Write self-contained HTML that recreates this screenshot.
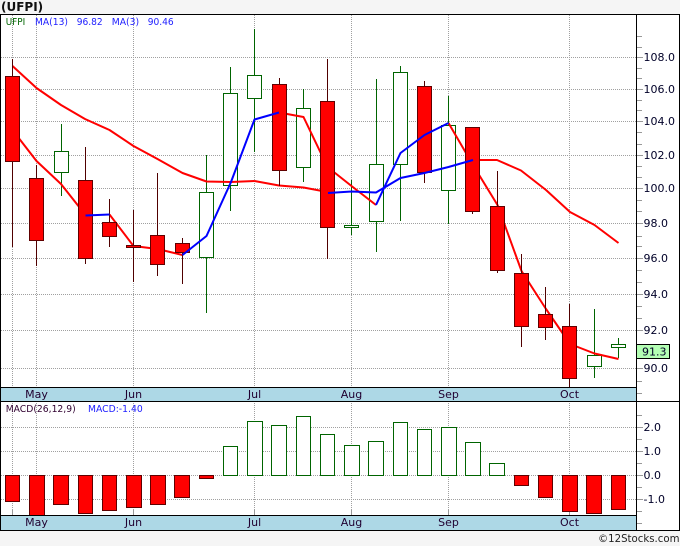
<!DOCTYPE html>
<html><head><meta charset="utf-8"><style>
html,body{margin:0;padding:0;background:#f5f5f5;width:680px;height:546px;overflow:hidden}
svg{display:block}
text{font-family:"DejaVu Sans",sans-serif}
.ax{font-size:11px;fill:#000028}
.mo{font-size:11px;fill:#200030;text-anchor:middle}
.lg{font-size:10px}
.g{stroke:#a0a0a0;stroke-width:1;stroke-dasharray:1 1;fill:none}
.t{stroke:#999;stroke-width:1;fill:none}
.gw{stroke:#006400;stroke-width:1;fill:none}
.gb{stroke:#006400;stroke-width:1;fill:#fff}
.rw{stroke:#500000;stroke-width:1;fill:none}
.rb{stroke:#600000;stroke-width:1;fill:#f00}
.l{fill:none;stroke-width:2;stroke-linejoin:round;stroke-linecap:butt}
</style></head><body>
<svg width="680" height="546" viewBox="0 0 680 546" xmlns="http://www.w3.org/2000/svg">
<rect x="0" y="14" width="680" height="517" fill="#fff"/>
<text x="1" y="11" style="font-size:12px;font-weight:bold" fill="#111">(UFPI)</text>

<g shape-rendering="crispEdges">
<path class="g" d="M1 57.5H636M1 89.5H636M1 121.5H636M1 155.5H636M1 188.5H636M1 223.5H636M1 258.5H636M1 294.5H636M1 330.5H636M1 368.5H636M1 427.5H636M1 451.5H636M1 475.5H636M1 499.5H636"/>
<path class="g" d="M12.5 15V515M36.5 15V515M133.5 15V515M254.5 15V515M351.5 15V515M448.5 15V515M569.5 15V515"/>
<path class="t" d="M12.5 510V515M36.5 510V515M133.5 510V515M254.5 510V515M351.5 510V515M448.5 510V515M569.5 510V515"/>
<path class="t" d="M637 36.5H642M637 47.5H642M637 57.5H643M637 68.5H642M637 78.5H642M637 89.5H643M637 100.5H642M637 110.5H642M637 121.5H643M637 132.5H642M637 144.5H642M637 155.5H643M637 166.5H642M637 177.5H642M637 188.5H643M637 200.5H642M637 211.5H642M637 223.5H643M637 236.5H642M637 246.5H642M637 258.5H643M637 270.5H642M637 282.5H642M637 294.5H643M637 306.5H642M637 318.5H642M637 330.5H643M637 368.5H643M637 381.5H642M637 393.5H642M637 415.5H642M637 427.5H643M637 439.5H642M637 451.5H643M637 463.5H642M637 475.5H643M637 487.5H642M637 499.5H643M637 511.5H642M637 523.5H642"/>

<!-- green candles -->
<path class="gw" d="M61.5 124V196M206.5 155V313M230.5 67V211M254.5 29V152M303.5 89V182M351.5 180V235M376.5 79V252M400.5 66V221M448.5 96V224M594.5 309V378M618.5 338V358"/>
<rect class="gb" x="54.5" y="151.5" width="14" height="21"/>
<rect class="gb" x="199.5" y="192.5" width="14" height="65"/>
<rect class="gb" x="223.5" y="93.5" width="14" height="92"/>
<rect class="gb" x="247.5" y="75.5" width="14" height="23"/>
<rect class="gb" x="296.5" y="108.5" width="14" height="59"/>
<rect class="gb" x="344.5" y="225.5" width="14" height="2"/>
<rect class="gb" x="369.5" y="164.5" width="14" height="57"/>
<rect class="gb" x="393.5" y="72.5" width="14" height="92"/>
<rect class="gb" x="441.5" y="125.5" width="14" height="65"/>
<rect class="gb" x="587.5" y="355.5" width="14" height="11"/>
<rect class="gb" x="611.5" y="344.5" width="14" height="3"/>
</g>

<!-- red MA lines -->
<polyline class="l" stroke="#f00" points="12.5,66 36.5,88 61,105 85,119 109.5,130 133.5,146 157.5,159 182.5,173 206.5,181.5 231,182 254.5,181"/>
<polyline class="l" stroke="#f00" points="254.5,181 279,185.5 303.5,187.5 327.5,192"/>
<polyline class="l" stroke="#f00" points="473,160 497,160 521,170.5 546,190 570,212 594.5,225 618.5,243"/>
<polyline class="l" stroke="#f00" points="12.5,130 36.5,161 61,184 85.5,215"/>
<polyline class="l" stroke="#f00" points="109.5,214.5 133.5,246 157.5,249 182.5,255"/>
<polyline class="l" stroke="#f00" points="279,112.5 303.5,117 327.5,167 351.5,186 376,205"/>
<polyline class="l" stroke="#f00" points="448.5,123 473,165 497.5,205 521.5,271 546,309 570,344 594.5,353.5 618.5,359"/>

<g shape-rendering="crispEdges">
<!-- red candles -->
<path class="rw" d="M12.5 59V247M36.5 165V266M85.5 147V264M109.5 199V247M133.5 210V282M157.5 173V276M182.5 238V284M279.5 78V186M327.5 59V259M424.5 81V183M472.5 127V214M497.5 171V273M521.5 254V347M545.5 287V340M569.5 304V387"/>
<rect class="rb" x="5.5" y="76.5" width="14" height="85"/>
<rect class="rb" x="29.5" y="178.5" width="14" height="62"/>
<rect class="rb" x="78.5" y="180.5" width="14" height="78"/>
<rect class="rb" x="102.5" y="222.5" width="14" height="14"/>
<rect class="rb" x="126.5" y="245.5" width="14" height="2"/>
<rect class="rb" x="150.5" y="235.5" width="14" height="29"/>
<rect class="rb" x="175.5" y="243.5" width="14" height="9"/>
<rect class="rb" x="272.5" y="84.5" width="14" height="86"/>
<rect class="rb" x="320.5" y="101.5" width="14" height="126"/>
<rect class="rb" x="417.5" y="86.5" width="14" height="86"/>
<rect class="rb" x="465.5" y="127.5" width="14" height="84"/>
<rect class="rb" x="490.5" y="206.5" width="14" height="64"/>
<rect class="rb" x="514.5" y="273.5" width="14" height="53"/>
<rect class="rb" x="538.5" y="314.5" width="14" height="13"/>
<rect class="rb" x="562.5" y="326.5" width="14" height="52"/>
</g>

<!-- blue lines -->
<polyline class="l" stroke="#00f" points="85.5,215.5 109.5,214.5"/>
<polyline class="l" stroke="#00f" points="182.5,255 206.5,236 231,182 254.5,119.5 279,112.5"/>
<polyline class="l" stroke="#00f" points="328,193 351.5,191.5 376,192.5 400.5,178 424.5,173 448.5,167 473,160"/>
<polyline class="l" stroke="#00f" points="376,205 400.5,153 424.5,135 448.5,123"/>

<g shape-rendering="crispEdges">
<!-- MACD -->
<rect class="rb" x="5.5" y="475.5" width="14" height="26"/>
<rect class="rb" x="29.5" y="475.5" width="15" height="40"/>
<rect class="rb" x="53.5" y="475.5" width="15" height="29"/>
<rect class="rb" x="78.5" y="475.5" width="14" height="38"/>
<rect class="rb" x="102.5" y="475.5" width="14" height="35"/>
<rect class="rb" x="126.5" y="475.5" width="15" height="32"/>
<rect class="rb" x="150.5" y="475.5" width="15" height="29"/>
<rect class="rb" x="174.5" y="475.5" width="15" height="22"/>
<rect class="rb" x="199.5" y="475.5" width="14" height="3"/>
<rect class="gb" x="223.5" y="446.5" width="14" height="29"/>
<rect class="gb" x="247.5" y="421.5" width="15" height="54"/>
<rect class="gb" x="271.5" y="425.5" width="15" height="50"/>
<rect class="gb" x="296.5" y="416.5" width="14" height="59"/>
<rect class="gb" x="320.5" y="434.5" width="14" height="41"/>
<rect class="gb" x="344.5" y="445.5" width="15" height="30"/>
<rect class="gb" x="368.5" y="441.5" width="15" height="34"/>
<rect class="gb" x="393.5" y="422.5" width="14" height="53"/>
<rect class="gb" x="417.5" y="429.5" width="14" height="46"/>
<rect class="gb" x="441.5" y="427.5" width="15" height="48"/>
<rect class="gb" x="465.5" y="442.5" width="15" height="33"/>
<rect class="gb" x="489.5" y="463.5" width="15" height="12"/>
<rect class="rb" x="514.5" y="475.5" width="14" height="10"/>
<rect class="rb" x="538.5" y="475.5" width="14" height="22"/>
<rect class="rb" x="562.5" y="475.5" width="15" height="36"/>
<rect class="rb" x="586.5" y="475.5" width="15" height="38"/>
<rect class="rb" x="611.5" y="475.5" width="14" height="34"/>

<!-- bands and frame -->
<rect x="1" y="388" width="635" height="13" fill="#add8e6"/>
<rect x="1" y="516" width="635" height="14" fill="#add8e6"/>
<rect x="0" y="14" width="680" height="1" fill="#000"/>
<rect x="0" y="387" width="636" height="1" fill="#000"/>
<rect x="0" y="401" width="680" height="1" fill="#000"/>
<rect x="0" y="515" width="636" height="1" fill="#000"/>
<rect x="0" y="530" width="680" height="1" fill="#000"/>
<rect x="0" y="14" width="1" height="517" fill="#000"/>
<rect x="636" y="14" width="1" height="517" fill="#000"/>
<rect x="679" y="14" width="1" height="517" fill="#000"/>
<rect x="636.5" y="344.5" width="33" height="14" fill="#b4ffb4" stroke="#000"/>
</g>

<!-- legends -->
<text class="lg" x="5.7" y="25" fill="#006400" textLength="19.5" lengthAdjust="spacingAndGlyphs">UFPI</text>
<text class="lg" x="35" y="25" fill="#2020ff" textLength="33" lengthAdjust="spacingAndGlyphs">MA(13)</text>
<text class="lg" x="76.7" y="25" fill="#2020ff" textLength="26" lengthAdjust="spacingAndGlyphs">96.82</text>
<text class="lg" x="111.7" y="25" fill="#2020ff" textLength="27.5" lengthAdjust="spacingAndGlyphs">MA(3)</text>
<text class="lg" x="147.7" y="25" fill="#2020ff" textLength="26" lengthAdjust="spacingAndGlyphs">90.46</text>
<text class="lg" x="5.7" y="412" fill="#300030" textLength="70" lengthAdjust="spacingAndGlyphs">MACD(26,12,9)</text>
<text class="lg" x="88" y="412" fill="#2020ff" textLength="54.7" lengthAdjust="spacingAndGlyphs">MACD:-1.40</text>

<!-- months -->
<text class="mo" x="36.5" y="398">May</text><text class="mo" x="133.5" y="398">Jun</text><text class="mo" x="254.5" y="398">Jul</text><text class="mo" x="351.5" y="398">Aug</text><text class="mo" x="448.5" y="398">Sep</text><text class="mo" x="569.5" y="398">Oct</text>
<text class="mo" x="36.5" y="526">May</text><text class="mo" x="133.5" y="526">Jun</text><text class="mo" x="254.5" y="526">Jul</text><text class="mo" x="351.5" y="526">Aug</text><text class="mo" x="448.5" y="526">Sep</text><text class="mo" x="569.5" y="526">Oct</text>

<!-- axis -->
<text class="ax" x="643.5" y="61">108.0</text>
<text class="ax" x="643.5" y="93">106.0</text>
<text class="ax" x="643.5" y="125">104.0</text>
<text class="ax" x="643.5" y="159">102.0</text>
<text class="ax" x="643.5" y="192">100.0</text>
<text class="ax" x="643.5" y="227">98.0</text>
<text class="ax" x="643.5" y="262">96.0</text>
<text class="ax" x="643.5" y="298">94.0</text>
<text class="ax" x="643.5" y="334">92.0</text>
<text class="ax" x="643.5" y="372">90.0</text>
<text class="ax" x="642" y="355.5">91.3</text>
<text class="ax" x="643.5" y="431">2.0</text>
<text class="ax" x="643.5" y="455">1.0</text>
<text class="ax" x="643.5" y="479">0.0</text>
<text class="ax" x="643.5" y="503">-1.0</text>

<text x="598" y="542" style="font-size:11px" fill="#222" textLength="81.5" lengthAdjust="spacingAndGlyphs">©12Stocks.com</text>
</svg>
</body></html>
